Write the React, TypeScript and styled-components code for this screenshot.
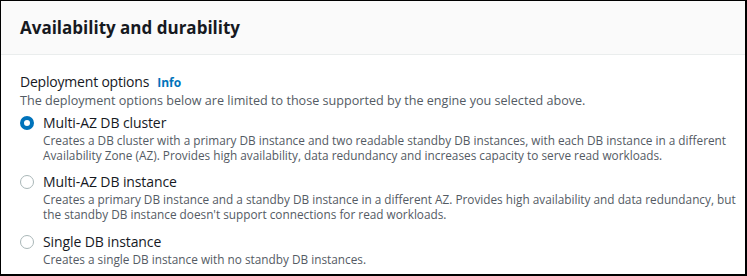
import React from "react";
import styled, { createGlobalStyle } from "styled-components";

const GlobalStyle = createGlobalStyle`
  html, body { margin: 0; padding: 0; background: #ffffff; }
  body { font-family: "Open Sans", "Noto Sans", Arial, sans-serif; }
  * { box-sizing: border-box; }
`;

const Frame = styled.div`
  width: 747px;
  height: 276px;
  border-top: 1px solid #000;
  border-left: 1px solid #000;
  border-right: 2px solid #000;
  border-bottom: 2px solid #000;
  background: #ffffff;
  display: flex;
  flex-direction: column;
  overflow: hidden;
`;

const Header = styled.div`
  height: 54px;
  flex-shrink: 0;
  background: #fafafa;
  border-bottom: 1px solid #eaeded;
  display: flex;
  align-items: center;
  padding: 0 19px;
`;

const Title = styled.h2`
  margin: 0;
  font-size: 17px;
  line-height: 22px;
  font-weight: 700;
  color: #16191f;
`;

const Body = styled.div`
  padding: 17px 19px 0;
  display: flex;
  flex-direction: column;
`;

const LabelRow = styled.div`
  display: flex;
  align-items: baseline;
  gap: 8px;
  font-size: 14px;
  line-height: 20px;
  letter-spacing: -0.2px;
  color: #16191f;
`;

const InfoLink = styled.a`
  font-size: 12px;
  font-weight: 700;
  letter-spacing: 0;
  color: #0073bb;
  text-decoration: none;
`;

const Hint = styled.div`
  font-size: 12.6px;
  line-height: 15px;
  color: #545b64;
  white-space: nowrap;
`;

const Options = styled.div`
  display: flex;
  flex-direction: column;
  gap: 9.5px;
  margin-top: 4.5px;
`;

const Option = styled.label`
  display: grid;
  grid-template-columns: 14px 1fr;
  column-gap: 9px;
  cursor: pointer;
`;

const Radio = styled.span<{ $checked?: boolean }>`
  width: 14px;
  height: 14px;
  margin-top: 3px;
  border-radius: 50%;
  background: #ffffff;
  border: ${(p) => (p.$checked ? "4px solid #0073bb" : "1.5px solid #aab7b8")};
`;

const OptionText = styled.div`
  display: flex;
  flex-direction: column;
`;

const OptionLabel = styled.div`
  font-size: 14px;
  line-height: 20px;
  letter-spacing: -0.1px;
  color: #16191f;
`;

const OptionDesc = styled.div`
  font-size: 11.8px;
  line-height: 15px;
  color: #545b64;
  white-space: nowrap;
`;

type Opt = { label: string; lines: string[]; checked?: boolean };

const options: Opt[] = [
  {
    label: "Multi-AZ DB cluster",
    checked: true,
    lines: [
      "Creates a DB cluster with a primary DB instance and two readable standby DB instances, with each DB instance in a different",
      "Availability Zone (AZ). Provides high availability, data redundancy and increases capacity to serve read workloads.",
    ],
  },
  {
    label: "Multi-AZ DB instance",
    lines: [
      "Creates a primary DB instance and a standby DB instance in a different AZ. Provides high availability and data redundancy, but",
      "the standby DB instance doesn't support connections for read workloads.",
    ],
  },
  {
    label: "Single DB instance",
    lines: ["Creates a single DB instance with no standby DB instances."],
  },
];

export default function App() {
  return (
    <>
      <GlobalStyle />
      <Frame>
        <Header>
          <Title>Availability and durability</Title>
        </Header>
        <Body>
          <LabelRow>
            <span>Deployment options</span>
            <InfoLink href="#">Info</InfoLink>
          </LabelRow>
          <Hint>
            The deployment options below are limited to those supported by the engine you selected above.
          </Hint>
          <Options>
            {options.map((o) => (
              <Option key={o.label}>
                <Radio $checked={o.checked} />
                <OptionText>
                  <OptionLabel>{o.label}</OptionLabel>
                  {o.lines.map((l) => (
                    <OptionDesc key={l}>{l}</OptionDesc>
                  ))}
                </OptionText>
              </Option>
            ))}
          </Options>
        </Body>
      </Frame>
    </>
  );
}
